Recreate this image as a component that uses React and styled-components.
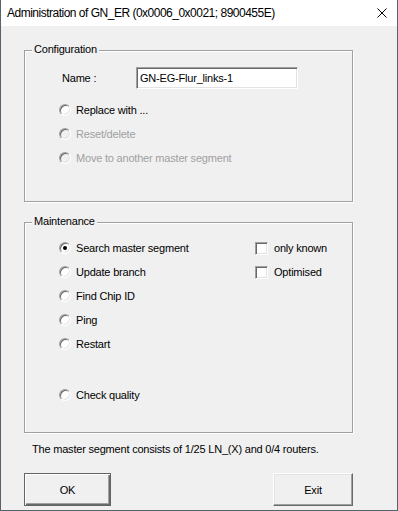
import React from "react";
import styled, { createGlobalStyle, css } from "styled-components";

const GlobalStyle = createGlobalStyle`
  html, body {
    margin: 0;
    padding: 0;
    background: #f0f0f0;
  }
`;

const Window = styled.div`
  width: 398px;
  height: 511px;
  box-sizing: border-box;
  display: flex;
  flex-direction: column;
  background: #f0f0f0;
  border: 1px solid #58626c;
  border-top: none;
  font-family: "Liberation Sans", Arial, sans-serif;
  font-size: 11px;
  letter-spacing: -0.2px;
  color: #000;
`;

const TitleBar = styled.div`
  flex: none;
  height: 26px;
  display: flex;
  align-items: center;
  justify-content: space-between;
  padding: 0 10px 0 6px;
  background: #fff;
  font-size: 12px;
  letter-spacing: -0.5px;
`;

const CloseIcon = () => (
  <svg width="10" height="10" viewBox="0 0 10 10">
    <path d="M0.5 0.5 L9.5 9.5 M9.5 0.5 L0.5 9.5" stroke="#000" strokeWidth="1" fill="none" />
  </svg>
);

const Body = styled.div`
  flex: 1;
  display: flex;
  flex-direction: column;
  padding: 24px 44px 0 23px;
`;

const Group = styled.div`
  position: relative;
  box-sizing: border-box;
  height: ${(p) => p.$height}px;
  margin-top: ${(p) => p.$gap || 0}px;
  padding: ${(p) => p.$pad};
  border: 1px solid #a0a0a0;
  box-shadow: inset 1px 1px #fff, 1px 1px #fff;
  display: flex;
  flex-direction: ${(p) => (p.$row ? "row" : "column")};
`;

const Legend = styled.span`
  position: absolute;
  top: -8px;
  left: 7px;
  padding: 0 2px;
  line-height: 13px;
  background: #f0f0f0;
`;

const NameRow = styled.div`
  display: flex;
  align-items: center;
  height: 22px;
  margin-left: 3px;
`;

const NameLabel = styled.span`
  width: 74px;
`;

const NameInput = styled.input`
  box-sizing: border-box;
  width: 162px;
  height: 22px;
  margin: 0;
  padding: 0 0 0 3px;
  font: inherit;
  letter-spacing: inherit;
  color: #000;
  background: #fff;
  border: 1px solid;
  border-color: #a0a0a0 #fff #fff #a0a0a0;
  box-shadow: inset 1px 1px #696969, inset -1px -1px #e3e3e3;
  outline: none;
`;

const Column = styled.div`
  display: flex;
  flex-direction: column;
  width: ${(p) => (p.$width ? `${p.$width}px` : "auto")};
  margin-top: ${(p) => p.$gap || 0}px;
`;

const Row = styled.label`
  display: flex;
  align-items: center;
  gap: ${(p) => p.$gap || 5}px;
  height: 24px;
  margin-top: ${(p) => p.$space || 0}px;
  color: ${(p) => (p.$disabled ? "#a0a0a0" : "#000")};
`;

const RadioCircle = styled.span`
  flex: none;
  position: relative;
  box-sizing: border-box;
  width: 12px;
  height: 12px;
  border-radius: 50%;
  border: 1px solid;
  border-color: #a0a0a0 #fff #fff #a0a0a0;
  background: ${(p) => (p.$disabled ? "#f0f0f0" : "#fff")};
  box-shadow: inset 1px 1px #696969, inset -1px -1px #e3e3e3;

  &::after {
    content: "";
    display: ${(p) => (p.$checked ? "block" : "none")};
    position: absolute;
    left: 3px;
    top: 3px;
    width: 4px;
    height: 4px;
    border-radius: 50%;
    background: #000;
  }
`;

const CheckBox = styled.span`
  flex: none;
  box-sizing: border-box;
  width: 13px;
  height: 13px;
  background: #fff;
  border: 1px solid;
  border-color: #a0a0a0 #fff #fff #a0a0a0;
  box-shadow: inset 1px 1px #696969, inset -1px -1px #e3e3e3;
`;

const Status = styled.div`
  margin-top: 10px;
  padding-left: 8px;
  line-height: 13px;
`;

const Buttons = styled.div`
  display: flex;
  justify-content: space-between;
  margin-top: 17px;
`;

const Button = styled.button`
  box-sizing: border-box;
  width: ${(p) => p.$width}px;
  height: 33px;
  margin: 0;
  padding: 0;
  font: inherit;
  letter-spacing: inherit;
  color: #000;
  background: #f0f0f0;
  border: 1px solid;
  ${(p) =>
    p.$default
      ? css`
          border-color: #646464;
          box-shadow: inset 1px 1px #fff, inset -1px -1px #696969, inset -2px -2px #a0a0a0;
        `
      : css`
          border-color: #fff #696969 #696969 #fff;
          box-shadow: inset -1px -1px #a0a0a0, inset 1px 1px #e3e3e3;
        `}
`;

const Radio = ({ label, checked, disabled, space }) => (
  <Row $disabled={disabled} $space={space}>
    <RadioCircle $checked={checked} $disabled={disabled} />
    {label}
  </Row>
);

const Check = ({ label }) => (
  <Row $gap={6}>
    <CheckBox />
    {label}
  </Row>
);

export default function App() {
  return (
    <>
      <GlobalStyle />
      <Window>
        <TitleBar>
          <span>Administration of GN_ER (0x0006_0x0021; 8900455E)</span>
          <CloseIcon />
        </TitleBar>
        <Body>
          <Group $height={152} $pad="16px 0 0 34px">
            <Legend>Configuration</Legend>
            <NameRow>
              <NameLabel>Name :</NameLabel>
              <NameInput defaultValue="GN-EG-Flur_links-1" />
            </NameRow>
            <Column $gap={9}>
              <Radio label="Replace with ..." />
              <Radio label="Reset/delete" disabled />
              <Radio label="Move to another master segment" disabled />
            </Column>
          </Group>
          <Group $height={211} $gap={20} $pad="13px 0 0 34px" $row>
            <Legend>Maintenance</Legend>
            <Column $width={196}>
              <Radio label="Search master segment" checked />
              <Radio label="Update branch" />
              <Radio label="Find Chip ID" />
              <Radio label="Ping" />
              <Radio label="Restart" />
              <Radio label="Check quality" space={27} />
            </Column>
            <Column>
              <Check label="only known" />
              <Check label="Optimised" />
            </Column>
          </Group>
          <Status>The master segment consists of 1/25 LN_(X) and 0/4 routers.</Status>
          <Buttons>
            <Button $width={87} $default>OK</Button>
            <Button $width={80}>Exit</Button>
          </Buttons>
        </Body>
      </Window>
    </>
  );
}
